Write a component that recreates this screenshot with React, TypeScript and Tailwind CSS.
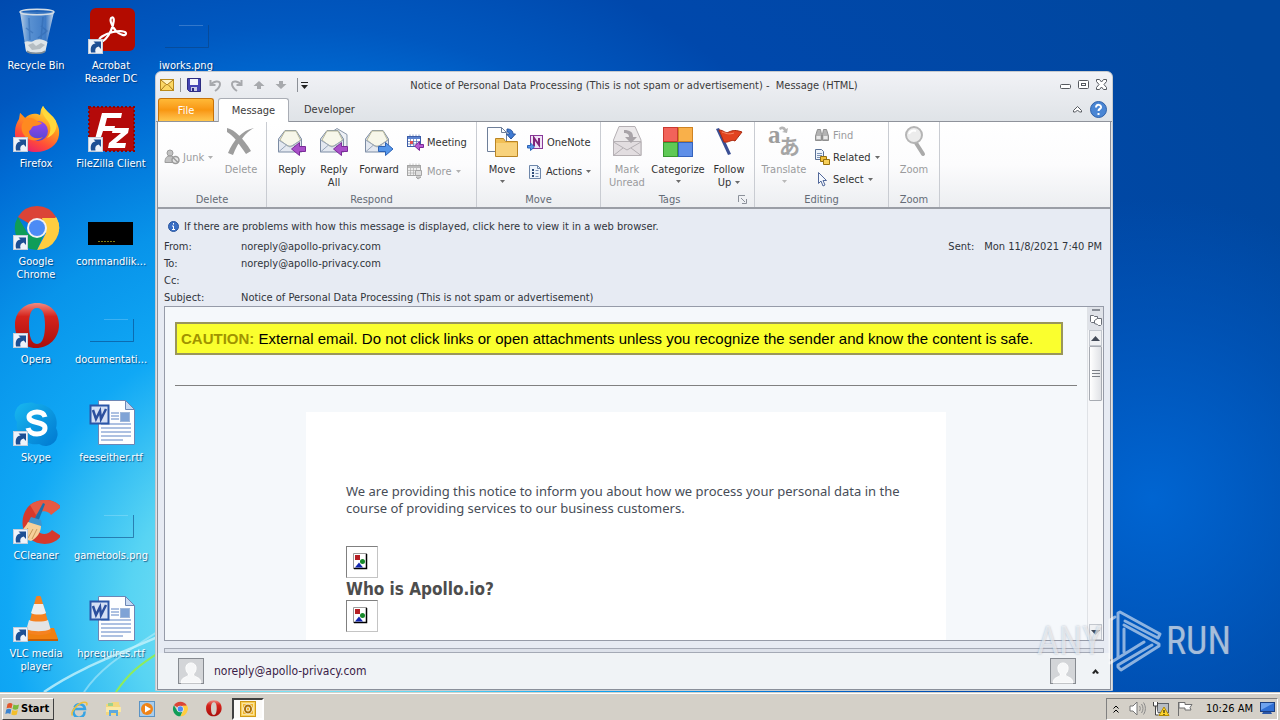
import type { ReactNode } from 'react'

type ToolProps = {
  icon: ReactNode
  label: string
  width: string
  second?: string
  disabled?: boolean
  arrow?: 'below' | 'inline'
}

function Caret({ className = '' }: { className?: string }) {
  return (
    <svg width="5" height="3" viewBox="0 0 5 3" className={`shrink-0 ${className}`}>
      <path d="M0 0h5L2.5 3z" fill="currentColor" />
    </svg>
  )
}

/* ---------- desktop icons ---------- */

function Shortcut() {
  return (
    <g>
      <rect x="1.5" y="31.5" width="14" height="14" fill="#eef3fa" stroke="#c4cedb" />
      <path d="M4 44.500c-1-6 1-8.500 4.500-9L6.500 33.500H14V41l-2.300-2.500c-3 .5-4 2.500-3.200 6z" fill="#1d4f93" />
    </g>
  )
}

function RecycleBin() {
  return (
    <svg width="48" height="48" viewBox="0 0 48 48">
      <defs>
        <linearGradient id="bin" x1="0" x2="1">
          <stop offset="0" stopColor="#c5d6e8" stopOpacity=".95" />
          <stop offset=".25" stopColor="#6c9fd8" stopOpacity=".85" />
          <stop offset=".75" stopColor="#4a83c9" stopOpacity=".85" />
          <stop offset="1" stopColor="#d5e2ef" stopOpacity=".95" />
        </linearGradient>
      </defs>
      <path d="M8 4l6 39c0 3 19 3 19 0l9-39z" fill="url(#bin)" />
      <path d="M12.500 34c4-2 6 1 9-1s8-3 14 1l-2 9c-1 3-18 3-19.500 0z" fill="#dfe5e8" />
      <path d="M16 37l5-2 3 3 5-3 4 2-5 4-8 1z" fill="#b5bdc2" />
      <path d="M14 20l7 5M29 18l6 5-9 7M17 10l1 22M31 9l-2 22" stroke="#2d65ad" strokeOpacity=".5" strokeWidth="1.500" fill="none" />
      <ellipse cx="25" cy="4" rx="17" ry="2.800" fill="#2f6dbb" fillOpacity=".7" stroke="#d3dde6" strokeWidth="1.500" />
      <path d="M15 43c2 3 16 3 18 0" stroke="#7d8b95" strokeWidth="1.500" fill="none" />
    </svg>
  )
}

function Acrobat() {
  return (
    <svg width="48" height="48" viewBox="0 0 48 48">
      <rect x="3" y="0" width="45" height="43" rx="6" fill="#b30b00" />
      <path
        d="M13 33c-3-2 4-7 13-9 7-1.500 13-1 13 1.500 0 3-6 1.500-10-2.500-5-5-7-13-4-13.500 3-.5 2 6-1 13-3 6.500-8 12.500-11 10.500z"
        fill="none"
        stroke="#fff"
        strokeWidth="2.200"
      />
      <Shortcut />
    </svg>
  )
}

function Firefox() {
  return (
    <svg width="48" height="48" viewBox="0 0 48 48">
      <defs>
        <linearGradient id="fox" x1=".8" y1="0" x2=".3" y2="1">
          <stop offset="0" stopColor="#fff14a" />
          <stop offset=".4" stopColor="#ff9a1f" />
          <stop offset=".75" stopColor="#ff4a3a" />
          <stop offset="1" stopColor="#e8206e" />
        </linearGradient>
        <linearGradient id="globe" x1="0" y1="0" x2="0" y2="1">
          <stop offset="0" stopColor="#9a45f0" />
          <stop offset="1" stopColor="#5448d0" />
        </linearGradient>
      </defs>
      <path d="M31 0c3 5 7 7 11 13 3 4 6 9 5 16-1 10-11 17-23 17S2 38 3 26c0-6 2-10 4-13l1-6 5 5c5-5 11-5 15-3 1-3 0-5 3-9z" fill="url(#fox)" />
      <circle cx="26" cy="25" r="10" fill="url(#globe)" />
      <path d="M8 7l5 5c5-1 9 0 12 3l5 2c-1 2-6 3-8 3s-2 3-5 5c0 6 7 9 14 6-6 6-18 4-21-6-1-5 0-8 2-10-2-1-4-5-4-8z" fill="#ff8a20" />
      <path d="M31 0c-2 5 0 9 4 14 4 4 5 12 0 18 7-3 11-9 9-17C41 9 35 7 31 0z" fill="#ffd93b" />
      <Shortcut />
    </svg>
  )
}

function FileZilla() {
  return (
    <svg width="48" height="48" viewBox="0 0 48 48">
      <rect x="2" y="1" width="45" height="44" fill="#b40a0a" stroke="#8d0505" strokeWidth="2" strokeDasharray="2 2" />
      <path d="M15 7h20l-1 5H20l-2 8h10l-1 5H16l-4 12H7z" fill="#fff" />
      <path d="M26 22h16l-1 5-12 10h10l-1 5H21l1-5 12-10h-9z" fill="#fff" />
      <Shortcut />
    </svg>
  )
}

function ChromeLogo({ size, shortcut }: { size: number; shortcut?: boolean }) {
  return (
    <svg width={size} height={size} viewBox="0 0 48 48">
      <path d="M25 24L5.900 13A22 22 0 0144.100 13z" fill="#db4437" />
      <path d="M44.100 13A22 22 0 0125 46l9-17-1-16z" fill="#ffcd40" />
      <path d="M25 46A22 22 0 015.900 13L16 30l16-1z" fill="#0f9d58" />
      <path d="M25 13h19.100L34 13zM16 13h28l-8 9H16z" fill="#db4437" />
      <path d="M30 14h14.500c2 4 3.500 9 2 14L33 27z" fill="#ffcd40" />
      <circle cx="25" cy="24" r="10" fill="#f1f1f1" />
      <circle cx="25" cy="24" r="8" fill="#4c8bf5" />
      {shortcut && <Shortcut />}
    </svg>
  )
}

function OperaLogo({ size, shortcut }: { size: number; shortcut?: boolean }) {
  return (
    <svg width={size} height={size} viewBox="0 0 48 48">
      <defs>
        <linearGradient id="opera" x1="0" y1="0" x2="0" y2="1">
          <stop offset="0" stopColor="#f08a80" />
          <stop offset=".3" stopColor="#d5231c" />
          <stop offset="1" stopColor="#a80f0c" />
        </linearGradient>
      </defs>
      <path
        fillRule="evenodd"
        d="M25 1C12 1 3 10 3 23s8 23 21 23 23-10 23-23S38 1 25 1zm0 5c6 0 8 7 8 17s-2 19-8 19-8-9-8-19 2-17 8-17z"
        fill="url(#opera)"
      />
      {shortcut && <Shortcut />}
    </svg>
  )
}

function Skype() {
  return (
    <svg width="48" height="48" viewBox="0 0 48 48">
      <defs>
        <linearGradient id="sky" x1="0" y1="0" x2="1" y2="1">
          <stop offset="0" stopColor="#18b8f0" />
          <stop offset="1" stopColor="#0078d0" />
        </linearGradient>
      </defs>
      <path d="M15 3a12 12 0 019 1 19 19 0 0120 24 12 12 0 01-17 16A19 19 0 015 22 12 12 0 0115 3z" fill="url(#sky)" />
      <path d="M33 17c-1-4-4-5-8-5s-8 2-8 5c0 7 16 4 16 11 0 4-4 6-8 6s-8-2-9-6" fill="none" stroke="#fff" strokeWidth="5" />
      <Shortcut />
    </svg>
  )
}

function CCleaner() {
  return (
    <svg width="48" height="48" viewBox="0 0 48 48">
      <path d="M49 9C42 0 27 0 18 7 8 16 8 33 18 41c9 7 24 7 31-3l-9-6c-4 5-11 5-14 1-4-4-4-14 0-18 4-3 10-3 13 1z" fill="#d6392c" />
      <path d="M49 9C42 0 27 0 18 7l6 10c4-5 12-5 15 0z" fill="#e65a43" />
      <path d="M31 5l2 1-7 18-4-2z" fill="#1c70ac" />
      <path d="M19 19l10 3 1 6-14-3z" fill="#3f95cf" />
      <path d="M16 24l13 4c0 6-4 12-10 15L2 38c6-3 11-8 14-14z" fill="#f6d09a" />
      <path d="M16 30l-7 9M21 31l-5 9M25 31l-5 10" stroke="#c99a5b" fill="none" />
      <Shortcut />
    </svg>
  )
}

function Vlc() {
  return (
    <svg width="48" height="48" viewBox="0 0 48 48">
      <path d="M10 32h32l4 11H5z" fill="#f08010" />
      <path d="M5 43h41v2H5z" fill="#c65f06" />
      <path d="M24 1c1-2 4-2 5 0l10 35c-4 4-20 4-24 0z" fill="#f58220" />
      <path d="M22 8h9l3 9c-3 2-12 2-15 0z" fill="#eee" />
      <path d="M17 24c4 2 15 2 19 0l2.500 9c-5 3-19 3-24 0z" fill="#e4e4e4" />
      <Shortcut />
    </svg>
  )
}

function WordDoc() {
  return (
    <svg width="48" height="48" viewBox="0 0 48 48">
      <path d="M11.500.500h27l9 9v35h-36z" fill="#fdfeff" stroke="#6c86b5" />
      <path d="M38.500.500v9h9z" fill="#c7d9f2" stroke="#6c86b5" />
      <path d="M24 13h8M24 16h8M24 19h8M14 24h30M14 28h30M14 32h30M14 36h30M14 40h22" stroke="#5d83c4" />
      <rect x="33.500" y="12.500" width="9" height="9" fill="#7fa3d6" stroke="#9fb7da" />
      <rect x="3.500" y="5.500" width="18" height="18" fill="#d5e0f5" stroke="#2b57a8" strokeWidth="2" />
      <path d="M6 10l3 9 4-8 1 8 5-10" fill="none" stroke="#2b4f9e" strokeWidth="2.500" />
    </svg>
  )
}

function TerminalShot() {
  return (
    <svg width="48" height="48" viewBox="0 0 48 48">
      <rect x="1" y="18" width="45" height="23" fill="#000" />
      <path d="M11 37.500h17" stroke="#7d7a10" strokeDasharray="2 1" />
    </svg>
  )
}

function ClearShot() {
  return (
    <svg width="48" height="48" viewBox="0 0 48 48">
      <path d="M3 39.500h43.500V17" stroke="#0b3f7c" strokeOpacity=".55" fill="none" />
      <path d="M17 17.500h24" stroke="#fff" strokeOpacity=".2" />
    </svg>
  )
}

const shortcuts: { label: string; icon: ReactNode }[] = [
  { label: 'Recycle Bin', icon: <RecycleBin /> },
  { label: 'Acrobat Reader DC', icon: <Acrobat /> },
  { label: 'iworks.png', icon: <ClearShot /> },
  { label: 'Firefox', icon: <Firefox /> },
  { label: 'FileZilla Client', icon: <FileZilla /> },
  { label: '', icon: null },
  { label: 'Google Chrome', icon: <ChromeLogo size={48} shortcut /> },
  { label: 'commandlik...', icon: <TerminalShot /> },
  { label: '', icon: null },
  { label: 'Opera', icon: <OperaLogo size={48} shortcut /> },
  { label: 'documentati...', icon: <ClearShot /> },
  { label: '', icon: null },
  { label: 'Skype', icon: <Skype /> },
  { label: 'feeseither.rtf', icon: <WordDoc /> },
  { label: '', icon: null },
  { label: 'CCleaner', icon: <CCleaner /> },
  { label: 'gametools.png', icon: <ClearShot /> },
  { label: '', icon: null },
  { label: 'VLC media player', icon: <Vlc /> },
  { label: 'hprequires.rtf', icon: <WordDoc /> },
]

/* ---------- ribbon icons ---------- */

function Envelope({ arrow }: { arrow: 'left' | 'all' | 'right' }) {
  return (
    <svg width="32" height="32" viewBox="0 0 32 32">
      {arrow === 'all' && <path d="M8 10L19 2.500l10 6V21H12z" fill="#eef1f5" stroke="#8795a8" />}
      <path d="M2.500 13L9 4.500h11L25.500 13v13h-23z" fill="#e3e8f0" stroke="#7b8ba3" />
      <path d="M4 14l5-9h11l4.500 9-8 6h-5z" fill="#f7f7ea" stroke="#b8b89a" />
      <path d="M2.500 14l11.500 7 11.500-7M2.500 26l8-7M25.500 26l-8-7" fill="none" stroke="#98a6bb" />
      {arrow === 'right' ? (
        <path d="M15.500 20.500h7v-4l7.500 6.500-7.500 6.500v-4h-7z" fill="#5596ea" stroke="#2c62b5" />
      ) : (
        <path d="M29.500 20.500h-6v-4l-8 6.500 8 6.500v-4h6z" fill="#a94fc9" stroke="#7a2b98" />
      )}
    </svg>
  )
}

function DeleteIcon() {
  return (
    <svg width="32" height="32" viewBox="0 0 32 32">
      <path d="M2 2c8 2 16 10 24 23l-5 3C14 18 9 10 2 6zM29 2C21 6 13 16 8 29l-5-2C8 15 17 4 29 2z" fill="#9d9d9d" />
    </svg>
  )
}

function JunkIcon() {
  return (
    <svg width="16" height="16" viewBox="0 0 16 16" fill="#c2c2c2" stroke="#9c9c9c">
      <circle cx="6" cy="4" r="3" />
      <path d="M1 13.500c0-5 2-6.500 5-6.500s4 1 4 4v2.500z" />
      <circle cx="11.500" cy="11" r="3.500" fill="#e6e6e6" strokeWidth="1.500" />
      <path d="M9 8.500l5 5" strokeWidth="1.500" />
    </svg>
  )
}

function CalendarIcon({ grey }: { grey?: boolean }) {
  const line = grey ? '#a5a5a5' : '#3c5da8'
  return (
    <svg width="17" height="17" viewBox="0 0 17 17">
      <rect x=".5" y="2.500" width="13" height="10" fill={grey ? '#eee' : '#fff'} stroke={line} />
      <path d="M1 4h12" stroke={grey ? '#bbb' : '#5b82cf'} strokeWidth="2" />
      <path d="M3.500 5v7M6.500 5v7M9.500 5v7M1 7.500h12M1 10h12M3 .5v2M6 .5v2M9 .5v2M12 .5v2" stroke={line} strokeOpacity=".6" />
      {grey ? (
        <path d="M8.500 7.500h6v5h-6zM11 16l-2-2h5z" fill="#ddd" stroke="#a5a5a5" />
      ) : (
        <>
          <path d="M3 7h3v3H3z" fill="#e05050" />
          <path d="M16.500 10.500h-4v-3l-5 4.500 5 4.500v-3h4z" fill="#b65ad3" stroke="#7a2b98" />
        </>
      )}
    </svg>
  )
}

function MoveIcon() {
  return (
    <svg width="32" height="32" viewBox="0 0 32 32">
      <path d="M1.500 1.500h14l5 5v19h-19z" fill="#fcfdff" stroke="#6e7f99" />
      <path d="M15.500 1.500v5h5" fill="none" stroke="#6e7f99" />
      <path d="M21 3c4 0 6 2 6 5h2.500l-4.500 5-4.500-5h3c0-1.500-1-2-2.500-2z" fill="#3f7bd4" stroke="#2a559c" />
      <path d="M9.500 12.500h8l2 3h12v15h-22z" fill="#f1bf55" stroke="#b98424" />
      <path d="M10 17h21v13H10z" fill="#f8d27c" />
    </svg>
  )
}

function OneNoteIcon() {
  return (
    <svg width="17" height="16" viewBox="0 0 17 16">
      <rect x="3.500" y=".5" width="12" height="13" fill="#f1e3f6" stroke="#883a99" />
      <path d="M7 11V3l5 7V3" fill="none" stroke="#80277c" strokeWidth="2" />
      <path d="M.5 10.500h3v-2.500l4 4-4 3.500v-2.500h-3z" fill="#5596ea" stroke="#2c62b5" />
    </svg>
  )
}

function ActionsIcon() {
  return (
    <svg width="16" height="16" viewBox="0 0 16 16">
      <path d="M2.500 1.500h8l3 3v10h-11z" fill="#eef4fb" stroke="#6e87aa" />
      <path d="M10.500 1.500v3h3" fill="none" stroke="#6e87aa" />
      <path d="M5 6h2M5 9h2M5 12h2" stroke="#2e4b77" strokeWidth="2" />
      <path d="M8.500 6.500h3M8.500 9.500h3M8.500 12.500h3" stroke="#7d93b5" />
    </svg>
  )
}

function MarkUnreadIcon() {
  return (
    <svg width="32" height="32" viewBox="0 0 32 32">
      <path d="M2.500 14L8 .5h16L30 14v15.500H2.500z" fill="#ebe8ea" stroke="#b5b0b4" />
      <path d="M2.500 15.500h27.500v14H2.500z" fill="#e2dde0" stroke="#b5b0b4" />
      <path d="M2.500 16L16 24l14-8M2.500 29.500L12 22M30 29.500L20 22" fill="none" stroke="#b5b0b4" />
      <path d="M13 4c6 0 9 2 9 7h4l-6 6-6-6h4c0-3-2-4-5-4z" fill="#a8a3a8" />
    </svg>
  )
}

function CategorizeIcon() {
  return (
    <svg width="32" height="32" viewBox="0 0 32 32">
      <rect x="1.500" y="1.500" width="14" height="14" fill="#f2635a" stroke="#c9392f" />
      <rect x="16.500" y="1.500" width="14" height="14" fill="#f9b04a" stroke="#cf8322" />
      <rect x="1.500" y="16.500" width="14" height="14" fill="#5fc955" stroke="#379630" />
      <rect x="16.500" y="16.500" width="14" height="14" fill="#5f8fe8" stroke="#3563bd" />
    </svg>
  )
}

function FlagIcon() {
  return (
    <svg width="32" height="32" viewBox="0 0 32 32">
      <path d="M3 3l3-1 12 26-3 1z" fill="#3a4f94" />
      <path d="M6 4c5 0 6 4 10 2s7-2 13 0l-7 9c-4-2-6 2-11 1z" fill="#e2431f" stroke="#a82a10" />
      <path d="M9 6c4 1 6 3 12 1" stroke="#f68a66" fill="none" />
    </svg>
  )
}

function TranslateIcon() {
  return (
    <svg width="32" height="32" viewBox="0 0 32 32" className="overflow-visible">
      <text x="0" y="17" fontSize="25" fontWeight="bold" fill="#9d9d9d" className="font-['Liberation_Serif',serif]">a</text>
      <text x="11" y="28" fontSize="21" fontWeight="bold" fill="#a5a5a5" className="font-['Noto_Sans_CJK_JP',sans-serif]">あ</text>
      <path d="M11 2c3-2 5-2 7 1l2-1-1 5-5-1 2-1c-1-2-2-2-4-1z" fill="#b5b5b5" />
    </svg>
  )
}

function FindIcon() {
  return (
    <svg width="16" height="14" viewBox="0 0 16 14" fill="#b3b3b3" stroke="#8f8f8f">
      <path d="M3.500 1.500h3l1 5v6H1.500V8zM9.500 1.500h3L14.500 8v4.500h-6v-6z" />
      <path d="M2.500 9.500h4M9.500 9.500h4" stroke="#e8e8e8" strokeWidth="3" />
    </svg>
  )
}

function RelatedIcon() {
  return (
    <svg width="16" height="16" viewBox="0 0 16 16">
      <path d="M1.500.5h6l2 2v8h-8z" fill="#eef4fb" stroke="#5a7094" />
      <path d="M3 4.500h5M3 6.500h5M3 8.500h5" stroke="#7d93b5" />
      <path d="M6.500 7.500h6v5h-6z" fill="#f0bf3a" stroke="#97700f" />
      <path d="M9.500 10.500h6v5h-6z" fill="#f8d059" stroke="#97700f" />
    </svg>
  )
}

function SelectIcon() {
  return (
    <svg width="16" height="16" viewBox="0 0 16 16">
      <path d="M4.500 1.500v11l2.500-2.500 2 5 2-1-2-4.500h3.500z" fill="#f4f8fe" stroke="#52689a" />
    </svg>
  )
}

function ZoomIcon() {
  return (
    <svg width="32" height="32" viewBox="0 0 32 32">
      <path d="M18 17l7 11" stroke="#aaa" strokeWidth="4" strokeLinecap="round" />
      <circle cx="16" cy="9" r="8" fill="#ececec" stroke="#b5b5b5" strokeWidth="2" />
      <path d="M11 8c1-3 4-4 7-3" stroke="#fff" strokeWidth="2" fill="none" />
    </svg>
  )
}

function Contact() {
  return (
    <svg width="26" height="26" viewBox="0 0 26 26">
      <rect x=".5" y=".5" width="25" height="25" fill="#d3d5d8" stroke="#878b91" />
      <path d="M13 5c4 0 5.500 3 5 6.500-.4 2-1.500 3.500-2.500 4.500 0 2 1.500 2.500 4 3.500 2 1 3 2 3.500 5.500H3c.5-3.500 1.500-4.500 3.500-5.500 2.500-1 4-1.500 4-3.500C9.500 15 8.400 13.500 8 11.500 7.500 8 9 5 13 5z" fill="#f6f7f8" stroke="#fff" />
    </svg>
  )
}

function BrokenImage() {
  return (
    <div className="h-8 w-8 border border-[#c4c4c4] border-l-[#808080] border-t-[#808080] pl-1.5 pt-1.5">
      <svg width="15" height="17" viewBox="0 0 15 17">
        <path d="M.5 16V.5H14" stroke="#9a9a9a" fill="none" />
        <path d="M13.500 1v14.500H1" stroke="#000" strokeWidth="1.500" fill="none" />
        <rect x="2" y="2" width="5" height="5" fill="#b51f24" />
        <circle cx="9.500" cy="8.500" r="2.500" fill="#178a2a" />
        <path d="M2 14.500l4-5 4 5z" fill="#1226b0" />
      </svg>
    </div>
  )
}

/* ---------- ribbon parts ---------- */

function BigTool({ icon, label, width, second, disabled, arrow }: ToolProps) {
  return (
    <button
      type="button"
      disabled={disabled}
      className={`flex shrink-0 flex-col items-center pt-1 text-[11px] leading-[13px] ${width} ${disabled ? 'text-[#9a9b9d]' : 'text-[#333]'}`}
    >
      {icon}
      <span className="mt-[5px] whitespace-nowrap">{label}</span>
      {second && (
        <span className="flex items-center gap-1">
          {second}
          {arrow === 'inline' && <Caret className="text-[#6b6b6b]" />}
        </span>
      )}
      {arrow === 'below' && <Caret className={`mt-1 ${disabled ? 'text-[#b9b9b9]' : 'text-[#6b6b6b]'}`} />}
    </button>
  )
}

function SmallTool({ icon, label, disabled, arrow }: Omit<ToolProps, 'width'>) {
  return (
    <button
      type="button"
      disabled={disabled}
      className={`flex items-center gap-[3px] whitespace-nowrap text-[11px] leading-[13px] ${disabled ? 'text-[#9a9b9d]' : 'text-[#333]'}`}
    >
      {icon}
      {label}
      {arrow && <Caret className={`ml-px ${disabled ? 'text-[#b0b0b0]' : 'text-[#6b6b6b]'}`} />}
    </button>
  )
}

function Group({ name, width, launcher, children }: { name: string; width: string; launcher?: boolean; children: ReactNode }) {
  return (
    <section className={`flex shrink-0 flex-col border-r border-[#c9ccd2] ${width}`}>
      <div className="flex h-[70px]">{children}</div>
      <div className="flex h-[15px] items-center text-[11px] leading-[13px] text-[#646b76]">
        <span className="flex-1 text-center">{name}</span>
        {launcher && (
          <button type="button" aria-label={`${name} options`} className="w-4">
            <svg width="9" height="9" viewBox="0 0 9 9" fill="none" stroke="#8c919a">
              <path d="M.5 7V.5H7M3 3l4 4M8.500 4v4.500H4" />
            </svg>
          </button>
        )}
      </div>
    </section>
  )
}

function Ribbon() {
  return (
    <div className="flex h-[87px] overflow-hidden border-b-2 border-[#9a9ea6] bg-linear-to-b from-white via-[#fcfcfd] to-[#eceef1]">
      <Group name="Delete" width="w-[109px]">
        <div className="flex w-[58px] items-center pl-1.5">
          <SmallTool icon={<JunkIcon />} label="Junk" disabled arrow="inline" />
        </div>
        <BigTool icon={<DeleteIcon />} label="Delete" width="w-[50px]" disabled />
      </Group>
      <Group name="Respond" width="w-[210px]">
        <div className="w-0.5" />
        <BigTool icon={<Envelope arrow="left" />} label="Reply" width="w-[46px]" />
        <BigTool icon={<Envelope arrow="all" />} label="Reply" second="All" width="w-[38px]" />
        <BigTool icon={<Envelope arrow="right" />} label="Forward" width="w-[52px]" />
        <div className="grid h-[58px] grid-rows-2 self-center pl-0.5">
          <SmallTool icon={<CalendarIcon />} label="Meeting" />
          <SmallTool icon={<CalendarIcon grey />} label="More" disabled arrow="inline" />
        </div>
      </Group>
      <Group name="Move" width="w-[124px]">
        <div className="w-0.5" />
        <BigTool icon={<MoveIcon />} label="Move" width="w-[46px]" arrow="below" />
        <div className="grid h-[58px] grid-rows-2 self-center pl-0.5">
          <SmallTool icon={<OneNoteIcon />} label="OneNote" />
          <SmallTool icon={<ActionsIcon />} label="Actions" arrow="inline" />
        </div>
      </Group>
      <Group name="Tags" width="w-[154px]" launcher>
        <div className="w-[3px]" />
        <BigTool icon={<MarkUnreadIcon />} label="Mark" second="Unread" width="w-[46px]" disabled />
        <BigTool icon={<CategorizeIcon />} label="Categorize" width="w-[56px]" arrow="below" />
        <BigTool icon={<FlagIcon />} label="Follow" second="Up" width="w-[46px]" arrow="inline" />
      </Group>
      <Group name="Editing" width="w-[134px]">
        <div className="w-0.5" />
        <BigTool icon={<TranslateIcon />} label="Translate" width="w-[54px]" disabled arrow="below" />
        <div className="grid h-[66px] grid-rows-3 self-center pl-[3px]">
          <SmallTool icon={<FindIcon />} label="Find" disabled />
          <SmallTool icon={<RelatedIcon />} label="Related" arrow="inline" />
          <SmallTool icon={<SelectIcon />} label="Select" arrow="inline" />
        </div>
      </Group>
      <Group name="Zoom" width="w-[51px]">
        <BigTool icon={<ZoomIcon />} label="Zoom" width="w-[50px]" disabled />
      </Group>
    </div>
  )
}

function TitleBar() {
  return (
    <div className="grid h-[26px] grid-cols-[1fr_auto_1fr] items-center text-[11px] leading-[13px] text-[#3b3b3b]">
      <div className="flex items-center pl-1">
        <svg width="14" height="12" viewBox="0 0 14 12">
          <rect x=".5" y=".5" width="13" height="11" fill="#fbd765" stroke="#b98a1d" />
          <path d="M1 1l6 5 6-5M1 11l4.500-5M13 11L8.500 6" stroke="#a87a1c" fill="#fff3c2" />
        </svg>
        <span className="ml-1.5 h-3.5 w-px bg-[#8c9097]" />
        <button type="button" aria-label="Save" className="ml-1.5">
          <svg width="14" height="14" viewBox="0 0 14 14">
            <path d="M.5.5h13v13h-11l-2-2z" fill="#4646b4" stroke="#2c2c82" />
            <path d="M3 1h8v6H3z" fill="#f4f6fb" />
            <path d="M4 9h6v4H4z" fill="#c9cce6" />
            <path d="M5 10h2v3H5z" fill="#2c2c82" />
          </svg>
        </button>
        <button type="button" disabled aria-label="Undo" className="ml-2">
          <svg width="13" height="13" viewBox="0 0 13 13" fill="none" stroke="#a7a9ad" strokeWidth="2">
            <path d="M1.500 1v5h5M2 6c2-4 9-5 9-1 0 3-2 5-5 7" />
          </svg>
        </button>
        <button type="button" disabled aria-label="Redo" className="ml-2">
          <svg width="13" height="13" viewBox="0 0 13 13" fill="none" stroke="#a7a9ad" strokeWidth="2">
            <path d="M11.500 1v5h-5M11 6C9 2 2 1 2 5c0 3 2 5 5 7" />
          </svg>
        </button>
        <button type="button" disabled aria-label="Previous item" className="ml-2.5">
          <svg width="12" height="8" viewBox="0 0 12 8">
            <path d="M6 0l5.500 5H8v3H4V5H.5z" fill="#a7a9ad" />
          </svg>
        </button>
        <button type="button" disabled aria-label="Next item" className="ml-2.5">
          <svg width="12" height="8" viewBox="0 0 12 8">
            <path d="M6 8L.5 3H4V0h4v3h3.500z" fill="#a7a9ad" />
          </svg>
        </button>
        <span className="ml-2.5 h-3.5 w-px bg-[#8c9097]" />
        <button type="button" aria-label="Customize toolbar" className="ml-[3px]">
          <svg width="7" height="7" viewBox="0 0 7 7">
            <path d="M0 0h7v1H0zM0 3h7L3.500 7z" fill="#222" />
          </svg>
        </button>
      </div>
      <h1 className="whitespace-pre">Notice of Personal Data Processing (This is not spam or advertisement) -  Message (HTML)</h1>
      <div className="flex items-center justify-end gap-[7px] pb-0.5 pr-[5px]">
        <button type="button" aria-label="Minimize">
          <svg width="11" height="11" viewBox="0 0 11 11" fill="#fff" stroke="#55595f">
            <rect x=".5" y="5.500" width="10" height="4" rx="1" />
          </svg>
        </button>
        <button type="button" aria-label="Restore">
          <svg width="11" height="11" viewBox="0 0 11 11" fill="#fff" stroke="#55595f">
            <rect x=".5" y="1.500" width="10" height="8" rx="1" />
            <rect x="3.500" y="4.500" width="4" height="2" />
          </svg>
        </button>
        <button type="button" aria-label="Close">
          <svg width="11" height="11" viewBox="0 0 11 11" fill="#fff" stroke="#55595f">
            <path d="M.5.500h3l2 2.500 2-2.500h3v2L8 5.500l2.500 3v2h-3l-2-2.500-2 2.500h-3v-2L3 5.500.5 2.500z" />
          </svg>
        </button>
      </div>
    </div>
  )
}

function Tabs() {
  return (
    <div className="flex h-6 border-b border-[#8f939b] px-0.5 text-[11px] leading-[13px] text-[#3b3b3b]">
      <button type="button" className="w-14 rounded-t-[3px] border border-b-0 border-[#c77208] bg-linear-to-b from-[#ffb936] via-[#f8960f] to-[#ffc64b] text-white">
        File
      </button>
      <button type="button" className="relative -mb-px ml-1 w-[71px] rounded-t-[3px] border border-b-0 border-[#a9adb5] bg-white">
        Message
      </button>
      <button type="button" className="ml-[7px] px-2">Developer</button>
      <button type="button" aria-label="Collapse ribbon" className="ml-auto">
        <svg width="9" height="7" viewBox="0 0 9 7" fill="#fff" stroke="#55595f">
          <path d="M.5 4.500l4-4 4 4v1.500h-2l-2-2-2 2h-2z" />
        </svg>
      </button>
      <button type="button" aria-label="Help" className="ml-2 mr-[3px]">
        <svg width="17" height="17" viewBox="0 0 17 17">
          <circle cx="8.500" cy="8.500" r="8" fill="#4a86d4" stroke="#2f62aa" />
          <path d="M6 6.500c0-4 5.500-3 5 0-.3 1.500-2.500 1.500-2.500 3.500M8.500 12v2" stroke="#fff" strokeWidth="2" fill="none" />
        </svg>
      </button>
    </div>
  )
}

function Headers() {
  return (
    <div className="px-1.5 pt-[9px] text-[11px] leading-[17px] text-[#30343b]">
      <a href="#browser" className="mb-[3px] flex items-center gap-[5px] pl-1">
        <svg width="11" height="11" viewBox="0 0 11 11">
          <circle cx="5.500" cy="5.500" r="5" fill="#3b6fc4" stroke="#2a559c" />
          <path d="M5.500 2v1.500M4 5h1.500v3.500M4 8.500h3" stroke="#fff" fill="none" />
        </svg>
        If there are problems with how this message is displayed, click here to view it in a web browser.
      </a>
      <div className="flex justify-between">
        <dl className="grid auto-rows-[17px] grid-cols-[77px_auto]">
          <dt>From:</dt>
          <dd>noreply@apollo-privacy.com</dd>
          <dt>To:</dt>
          <dd>noreply@apollo-privacy.com</dd>
          <dt>Cc:</dt>
          <dd />
          <dt>Subject:</dt>
          <dd>Notice of Personal Data Processing (This is not spam or advertisement)</dd>
        </dl>
        <dl className="flex gap-2.5 self-start pr-0.5">
          <dt>Sent:</dt>
          <dd>Mon 11/8/2021 7:40 PM</dd>
        </dl>
      </div>
    </div>
  )
}

function ScrollBar() {
  return (
    <div className="flex w-4 shrink-0 flex-col items-center border-l border-[#dfe2e6] bg-[#f6f7f9]">
      <div className="flex h-[23px] w-full flex-col items-center gap-[3px] bg-[#dfe2e8] pt-0.5">
        <span className="h-0.5 w-2 bg-[#888d96]" />
        <svg width="12" height="12" viewBox="0 0 12 12" fill="#fff" stroke="#6a6f78">
          <path d="M.5 1.500h3l1 1h3v5l-1 1h-5l-1-1z" />
          <path d="M4.500 6.500l3-2h4v6l-1 1h-2l-1-1-3-1z" />
        </svg>
      </div>
      <button type="button" aria-label="Scroll up" className="flex h-4 w-[13px] items-center justify-center border border-[#c3c7ce] bg-[#f0f1f3]">
        <svg width="9" height="5" viewBox="0 0 9 5"><path d="M0 5l4.500-5L9 5z" fill="#434a57" /></svg>
      </button>
      <div className="flex h-[55px] w-[13px] flex-col items-center justify-center gap-0.5 rounded-[1px] border border-[#a7abb2] bg-linear-to-r from-white to-[#e0e2e6]">
        <span className="h-px w-2 bg-[#7c8087]" />
        <span className="h-px w-2 bg-[#7c8087]" />
        <span className="h-px w-2 bg-[#7c8087]" />
      </div>
      <button type="button" aria-label="Scroll down" className="mt-auto flex h-4 w-[13px] items-center justify-center border border-[#c3c7ce] bg-[#f0f1f3]">
        <svg width="9" height="5" viewBox="0 0 9 5"><path d="M0 0h9L4.500 5z" fill="#434a57" /></svg>
      </button>
    </div>
  )
}

function MessageWindow() {
  return (
    <main className="absolute bottom-px left-[155px] right-[167px] top-[71px] flex flex-col overflow-hidden rounded-t-md border border-[#c6cace] bg-linear-to-b from-[#f1f2f6] to-[#dfe3e7] to-[50px]">
      <TitleBar />
      <Tabs />
      <div className="mx-px flex min-h-0 flex-1 flex-col border-x border-b border-[#8a8f9a] bg-[#e7ebf3]">
        <Ribbon />
        <Headers />
        <div className="mx-1.5 flex min-h-0 flex-1 border border-[#969ba8]">
          <article className="flex-1 overflow-hidden bg-[#f5f8fb] px-2.5 pt-[15px]">
            <p className="mr-3.5 h-[33px] overflow-hidden whitespace-nowrap border-2 border-[#9a965a] bg-[#faff2e] pl-1 font-['Liberation_Sans',sans-serif] text-[15px] leading-[29px] text-black">
              <span className="font-bold text-[#a09300]">CAUTION:</span> External email. Do not click links or open attachments unless you recognize the sender and know the content is safe.
            </p>
            <hr className="mt-[30px] border-[#808080]" />
            <div className="mx-auto mt-[26px] h-[400px] max-w-[640px] bg-white px-10 pt-[71px] font-['Noto_Sans',sans-serif] text-[13px] leading-[17px] text-[#474d57]">
              <p className="mb-[29px]">
                We are providing this notice to inform you about how we process your personal data in the course of providing services to our business customers.
              </p>
              <BrokenImage />
              <h2 className="font-['DejaVu_Sans_Condensed','DejaVu_Sans',sans-serif] text-[17px] font-bold leading-[22px] text-[#4d4d4d]">Who is Apollo.io?</h2>
              <BrokenImage />
            </div>
          </article>
          <ScrollBar />
        </div>
        <div className="mx-1.5 mt-[7px] h-[5px] border border-[#a4a9b5] bg-[#dde1ea]" />
        <footer className="flex h-9 items-center bg-[#f0f3f6] pl-5 pr-[11px] text-xs text-[#3a1c46]">
          <Contact />
          <a href="#sender" className="ml-2.5">noreply@apollo-privacy.com</a>
          <span className="ml-auto mr-4"><Contact /></span>
          <button type="button" aria-label="Expand people pane">
            <svg width="7" height="5" viewBox="0 0 7 5"><path d="M0 4l3.500-4L7 4 5 5 3.500 3 2 5z" fill="#222" /></svg>
          </button>
        </footer>
      </div>
    </main>
  )
}

function Watermark() {
  return (
    <div className="pointer-events-none absolute bottom-[19px] right-[49px] flex items-center gap-1 font-['Roboto_Condensed','Roboto',sans-serif] text-[38px] leading-none text-white/60 [text-shadow:0_0_2px_rgba(90,110,140,0.45)]">
      <span>ANY</span>
      <svg width="56" height="64" viewBox="0 0 56 64" fill="none" stroke="#fff" strokeWidth="3" strokeLinejoin="round" strokeLinecap="round" className="opacity-55">
        <path d="M12 48V4l2-1 40 22-2 4-33-17" />
        <path d="M18 16l35 19v2L15 61l-3-3v-2l34-20" />
        <path d="M18 20v23M4 54l34-21M9 8L4 11v38" />
      </svg>
      <span>RUN</span>
    </div>
  )
}

function TaskBar() {
  return (
    <footer className="flex h-7 shrink-0 items-center border-t border-[#d4d0c8] bg-[#d4d0c8] px-0.5 text-[11px] leading-[13px] text-black shadow-[inset_0_1px_0_#fff]">
      <button
        type="button"
        className="mt-1 flex h-[22px] w-[52px] items-center gap-px border border-b-[#404040] border-l-white border-r-[#404040] border-t-white pl-0.5 font-bold"
      >
        <svg width="15" height="14" viewBox="0 0 15 14" className="shrink-0">
          <path d="M2.500 2c2-1.500 4-1 5 0l-1 4.500c-1.500-1-3-1-5 0z" fill="#e2572b" />
          <path d="M8.500 2.500c2 1 3.500 1 5.500 0l-1 4.500c-2 1-3.500 1-5.500 0z" fill="#7cb93a" />
          <path d="M1.300 7.500c2-1 3.500-1 5 0L5.300 12c-1.500-1-3-1-5 0z" fill="#3b84d0" />
          <path d="M7.300 8c2 1 3.500 1 5.500 0l-1 4.500c-2 1-3.500 1-5.500 0z" fill="#f3bf2b" />
        </svg>
        Start
      </button>
      <nav className="ml-[17px] mt-1 flex items-center gap-[17px]">
        <button type="button" aria-label="Internet Explorer">
          <svg width="17" height="16" viewBox="0 0 17 16" fill="none">
            <path d="M13.500 10.500A5.500 5.500 0 113.500 8h10.500a5.500 5.500 0 00-10.500-1.500" stroke="#37a4e4" strokeWidth="2.500" />
            <path d="M1.500 14.500C-1 11 8 0 15 1.500c1.500.5 1 2 .5 3" stroke="#eebf3a" strokeWidth="1.500" />
          </svg>
        </button>
        <button type="button" aria-label="Explorer">
          <svg width="17" height="16" viewBox="0 0 17 16">
            <path d="M1 3h5l1-2h7v3h1v10H1z" fill="#f3d77e" />
            <path d="M3 2h5v3H3z" fill="#9ed28c" />
            <path d="M1 6h15v5H1z" fill="#f9e8a8" />
            <path d="M4 15V9h9v6h-2v-3H6v3z" fill="#5ea9dd" />
          </svg>
        </button>
        <button type="button" aria-label="Media Player">
          <svg width="16" height="16" viewBox="0 0 16 16">
            <rect x=".5" y=".5" width="15" height="15" fill="#a9cdec" stroke="#5b93c4" />
            <circle cx="8" cy="8" r="6" fill="#f08418" />
            <path d="M6 4.500l6 3.500-6 3.500z" fill="#fff" />
          </svg>
        </button>
        <button type="button" aria-label="Chrome"><ChromeLogo size={16} /></button>
        <button type="button" aria-label="Opera"><OperaLogo size={17} /></button>
      </nav>
      <button
        type="button"
        aria-label="Outlook"
        className="ml-2.5 mt-1 flex h-[22px] w-8 items-center justify-center border-2 border-b-white border-l-[#404040] border-r-white border-t-[#404040] bg-[#fbfaf8]"
      >
        <svg width="16" height="16" viewBox="0 0 16 16">
          <rect x=".5" y=".5" width="15" height="15" fill="#f8cf5a" stroke="#d19a17" />
          <rect x="2.500" y="2.500" width="11" height="11" fill="#f0b429" stroke="#fbe39b" />
          <ellipse cx="8" cy="8" rx="3" ry="3.500" fill="none" stroke="#fff" strokeWidth="3.500" />
          <ellipse cx="8" cy="8" rx="3" ry="3.500" fill="none" stroke="#a86f0a" strokeWidth="2" />
        </svg>
      </button>
      <div className="ml-auto mt-1 flex h-[22px] items-center border border-b-white border-l-[#808080] border-r-white border-t-[#808080] pl-1.5 pr-0.5">
        <svg width="6" height="8" viewBox="0 0 6 8" fill="none" stroke="#000">
          <path d="M.5 3.500L3 1l2.500 2.500M.5 7.500L3 5l2.500 2.500" />
        </svg>
        <svg width="17" height="15" viewBox="0 0 17 15" className="ml-2.5" fill="none" stroke="#8a8a8a">
          <path d="M1 5h3l4-4v13l-4-4H1z" fill="#fff" stroke="#777" />
          <path d="M10.500 5c1 1.500 1 3.500 0 5M12.500 3c2 3 2 6 0 9M14.500 1.500c2.500 4 2.500 8 0 12" />
        </svg>
        <svg width="17" height="15" viewBox="0 0 17 15" className="ml-[7px]">
          <rect x="4.500" y="2.500" width="11" height="9" fill="#b7bcc2" stroke="#5d6168" />
          <path d="M.5 1v4h4V1M2.500 5v9h3" stroke="#444" fill="#fff" />
          <path d="M11 6l5 8.500H6z" fill="#ffd52e" stroke="#b38a00" />
          <path d="M11 9v3M11 13v1" stroke="#000" />
        </svg>
        <svg width="17" height="15" viewBox="0 0 17 15" className="ml-[7px]" fill="#fff" stroke="#6f6f6f">
          <path d="M1.500 1v14" />
          <path d="M2 1.500h6v2h7l-2 3 1 2.500H8v-2H2z" />
        </svg>
        <time className="ml-3 whitespace-nowrap">10:26 AM</time>
        <svg width="15" height="13" viewBox="0 0 15 13" className="ml-[7px]">
          <rect x=".5" y=".5" width="14" height="9" fill="#2f6fd4" stroke="#1c3f80" />
          <path d="M1 1h13L1 8z" fill="#6da2ee" />
          <path d="M3 10h8l1 2H2z" fill="#2b57a8" />
        </svg>
      </div>
    </footer>
  )
}

export default function App() {
  return (
    <div className="flex h-screen flex-col overflow-hidden font-['DejaVu_Sans_Condensed','DejaVu_Sans',sans-serif]">
      <div className="relative min-h-0 flex-1 overflow-hidden bg-[radial-gradient(circle_300px_at_90%_72%,rgba(0,104,214,0.9),rgba(0,92,196,0.5)_60%,rgba(0,80,170,0)),radial-gradient(circle_1100px_at_23%_88%,#9beef5_0%,#58d4f3_15%,#10a8f5_26%,#0894ea_36%,#006cd4_47%,#0058c0_53%,#0048ac_63%,#00479e_100%)]">
        <svg width="160" height="70" viewBox="0 0 160 70" fill="none" className="absolute bottom-0 left-0">
          <path d="M44 70C80 45 120 32 160 14" stroke="#c6f2fb" strokeOpacity=".8" strokeWidth="2.500" />
          <path d="M84 70c18-26 40-38 76-62" stroke="#c6f2fb" strokeOpacity=".5" strokeWidth="2" />
          <path d="M116 70c12-18 24-28 44-40" stroke="#8fec5a" strokeWidth="2" />
        </svg>
        <ul className="-ml-px grid auto-rows-[98px] grid-cols-[repeat(3,74px)] gap-x-px text-[11px] leading-[13px] text-white [text-shadow:1px_1px_1px_rgba(0,40,90,0.7)]">
          {shortcuts.map((item, i) => (
            <li key={i} className="flex flex-col items-center pt-2 text-center">
              {item.icon}
              <span className="mt-[3px]">{item.label}</span>
            </li>
          ))}
        </ul>
        <MessageWindow />
        <Watermark />
      </div>
      <TaskBar />
    </div>
  )
}
